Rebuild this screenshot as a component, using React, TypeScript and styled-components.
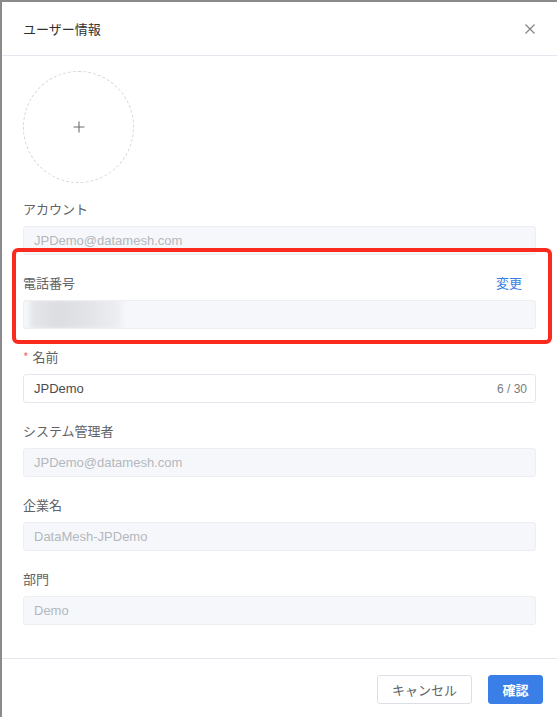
import React from "react";
import styled, { createGlobalStyle } from "styled-components";

const GlobalStyle = createGlobalStyle`
  html, body { margin: 0; padding: 0; background: #ffffff; }
  body { font-family: "Liberation Sans", "Noto Sans CJK JP", Arial, sans-serif; }
  * { box-sizing: border-box; }
`;

const Dialog = styled.div`
  width: 557px;
  height: 717px;
  background: #ffffff;
  border-top: 2px solid #8a8a8a;
  border-left: 2px solid #8a8a8a;
  display: flex;
  flex-direction: column;
  overflow: hidden;
`;

const Header = styled.div`
  height: 54px;
  flex: none;
  display: flex;
  align-items: center;
  justify-content: space-between;
  padding: 0 20px 0 21px;
  border-bottom: 1px solid #e4e7ed;
`;

const Title = styled.div`
  font-family: "Noto Sans CJK JP", sans-serif;
  font-size: 13px;
  color: #303133;
`;

const Close = styled.button`
  border: none;
  background: none;
  padding: 0;
  width: 14px;
  height: 14px;
  display: flex;
  align-items: center;
  justify-content: center;
  cursor: pointer;
`;

const Body = styled.div`
  flex: 1;
  padding: 15px 21px 0 21px;
`;

const Avatar = styled.div`
  width: 111px;
  height: 112px;
  border-radius: 50%;
  border: 1px dashed #d4d7de;
  display: flex;
  align-items: center;
  justify-content: center;
  margin-bottom: 15px;
`;

const Field = styled.div`
  position: relative;
  margin-bottom: 17px;
`;

const LabelRow = styled.div`
  display: flex;
  align-items: center;
  justify-content: space-between;
  height: 20px;
  margin-bottom: 8px;
`;

const Label = styled.label`
  font-family: "Noto Sans CJK JP", sans-serif;
  font-size: 13px;
  color: #606266;
  display: flex;
  align-items: center;
`;

const Required = styled.span`
  color: #f56c6c;
  font-size: 12px;
  margin-right: 4px;
`;

const LinkText = styled.span`
  font-family: "Noto Sans CJK JP", sans-serif;
  font-size: 13px;
  color: #3a7ee8;
  margin-right: 14px;
`;

const Input = styled.div<{ $disabled?: boolean }>`
  height: 29px;
  border-radius: 3px;
  border: 1px solid ${(p) => (p.$disabled ? "#eceef2" : "#e4e7ed")};
  background: ${(p) => (p.$disabled ? "#f5f7fa" : "#ffffff")};
  color: ${(p) => (p.$disabled ? "#b4b7bd" : "#4a4c50")};
  font-size: 13px;
  display: flex;
  align-items: center;
  justify-content: space-between;
  padding: 0 8px 0 10px;
  position: relative;
  overflow: hidden;
`;

const Counter = styled.span`
  font-size: 12px;
  color: #7a7c80;
`;

const Redacted = styled.div`
  position: absolute;
  left: 6px;
  top: -2px;
  width: 92px;
  height: 30px;
  background:
    linear-gradient(90deg, #e6e7e9 0%, #dcdde0 30%, #e2e3e6 60%, #eeeff2 100%);
  filter: blur(2px);
`;

const Highlight = styled.div`
  position: absolute;
  left: -11px;
  top: -24px;
  width: 540px;
  height: 96px;
  border: 4px solid #fa2a1e;
  border-radius: 6px;
  pointer-events: none;
`;

const Footer = styled.div`
  height: 59px;
  flex: none;
  border-top: 1px solid #e4e7ed;
  display: flex;
  align-items: flex-start;
  justify-content: flex-end;
  gap: 16px;
  padding: 16px 14px 0 0;
`;

const Button = styled.button<{ $primary?: boolean }>`
  height: 29px;
  padding: 0 ${(p) => (p.$primary ? "13px" : "14px")};
  min-width: ${(p) => (p.$primary ? "55px" : "94px")};
  border-radius: 3px;
  border: 1px solid ${(p) => (p.$primary ? "#3a7ee8" : "#dcdfe6")};
  background: ${(p) => (p.$primary ? "#3a7ee8" : "#ffffff")};
  color: ${(p) => (p.$primary ? "#ffffff" : "#606266")};
  font-family: "Noto Sans CJK JP", sans-serif;
  font-size: 13px;
  font-weight: ${(p) => (p.$primary ? 600 : 400)};
  cursor: pointer;
`;

export default function App() {
  return (
    <>
      <GlobalStyle />
      <Dialog>
        <Header>
          <Title>ユーザー情報</Title>
          <Close aria-label="close">
            <svg width="12" height="12" viewBox="0 0 12 12">
              <path d="M1.5 1.5 L10.5 10.5 M10.5 1.5 L1.5 10.5" stroke="#7d7f84" strokeWidth="1.1" />
            </svg>
          </Close>
        </Header>
        <Body>
          <Avatar>
            <svg width="12" height="12" viewBox="0 0 12 12">
              <path d="M6 0.5 V11.5 M0.5 6 H11.5" stroke="#6b6d72" strokeWidth="1.1" />
            </svg>
          </Avatar>

          <Field>
            <LabelRow>
              <Label>アカウント</Label>
            </LabelRow>
            <Input $disabled>JPDemo@datamesh.com</Input>
          </Field>

          <Field>
            <Highlight />
            <LabelRow>
              <Label>電話番号</Label>
              <LinkText>変更</LinkText>
            </LabelRow>
            <Input $disabled>
              <Redacted />
            </Input>
          </Field>

          <Field>
            <LabelRow>
              <Label>
                <Required>*</Required>名前
              </Label>
            </LabelRow>
            <Input>
              <span>JPDemo</span>
              <Counter>6 / 30</Counter>
            </Input>
          </Field>

          <Field>
            <LabelRow>
              <Label>システム管理者</Label>
            </LabelRow>
            <Input $disabled>JPDemo@datamesh.com</Input>
          </Field>

          <Field>
            <LabelRow>
              <Label>企業名</Label>
            </LabelRow>
            <Input $disabled>DataMesh-JPDemo</Input>
          </Field>

          <Field>
            <LabelRow>
              <Label>部門</Label>
            </LabelRow>
            <Input $disabled>Demo</Input>
          </Field>
        </Body>
        <Footer>
          <Button>キャンセル</Button>
          <Button $primary>確認</Button>
        </Footer>
      </Dialog>
    </>
  );
}
